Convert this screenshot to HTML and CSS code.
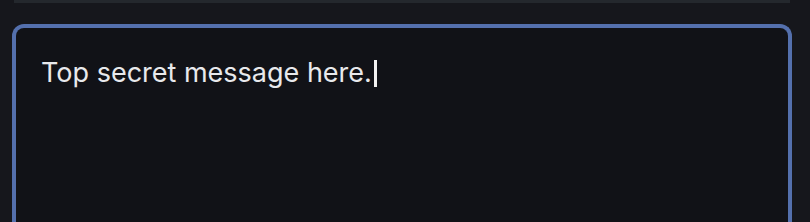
FILE: index.html
```html
<!DOCTYPE html>
<html>
<head>
<meta charset="utf-8">
<link rel="stylesheet" href="styles.css">
</head>
<body>
<div class="page">
  <div class="topbar"></div>
  <div class="editor">
    <div class="text">Top secret message here.<span class="caret"></span></div>
  </div>
</div>
</body>
</html>
```
FILE: styles.css
```css
html, body {
  margin: 0;
  padding: 0;
  background: #16171c;
  height: 100%;
  overflow: hidden;
}
.page {
  height: 100%;
  display: flex;
  flex-direction: column;
}
.topbar {
  margin: 0 20px 0 14px;
  height: 3px;
  flex: none;
  background: #24282d;
}
.editor {
  flex: 1;
  margin: 21px 18px 0 12px;
  border: 4px solid #5470ad;
  border-bottom: none;
  border-radius: 12px 12px 0 0;
  background: #111217;
  padding: 27px 25px 0;
}
.text {
  font-family: Inter, "Noto Sans", sans-serif;
  font-size: 27px;
  line-height: 36px;
  color: #e8e9ec;
  display: flex;
  align-items: center;
}
.caret {
  display: inline-block;
  width: 3px;
  height: 27px;
  background: #f2f2f2;
  margin-left: 2px;
}
```
